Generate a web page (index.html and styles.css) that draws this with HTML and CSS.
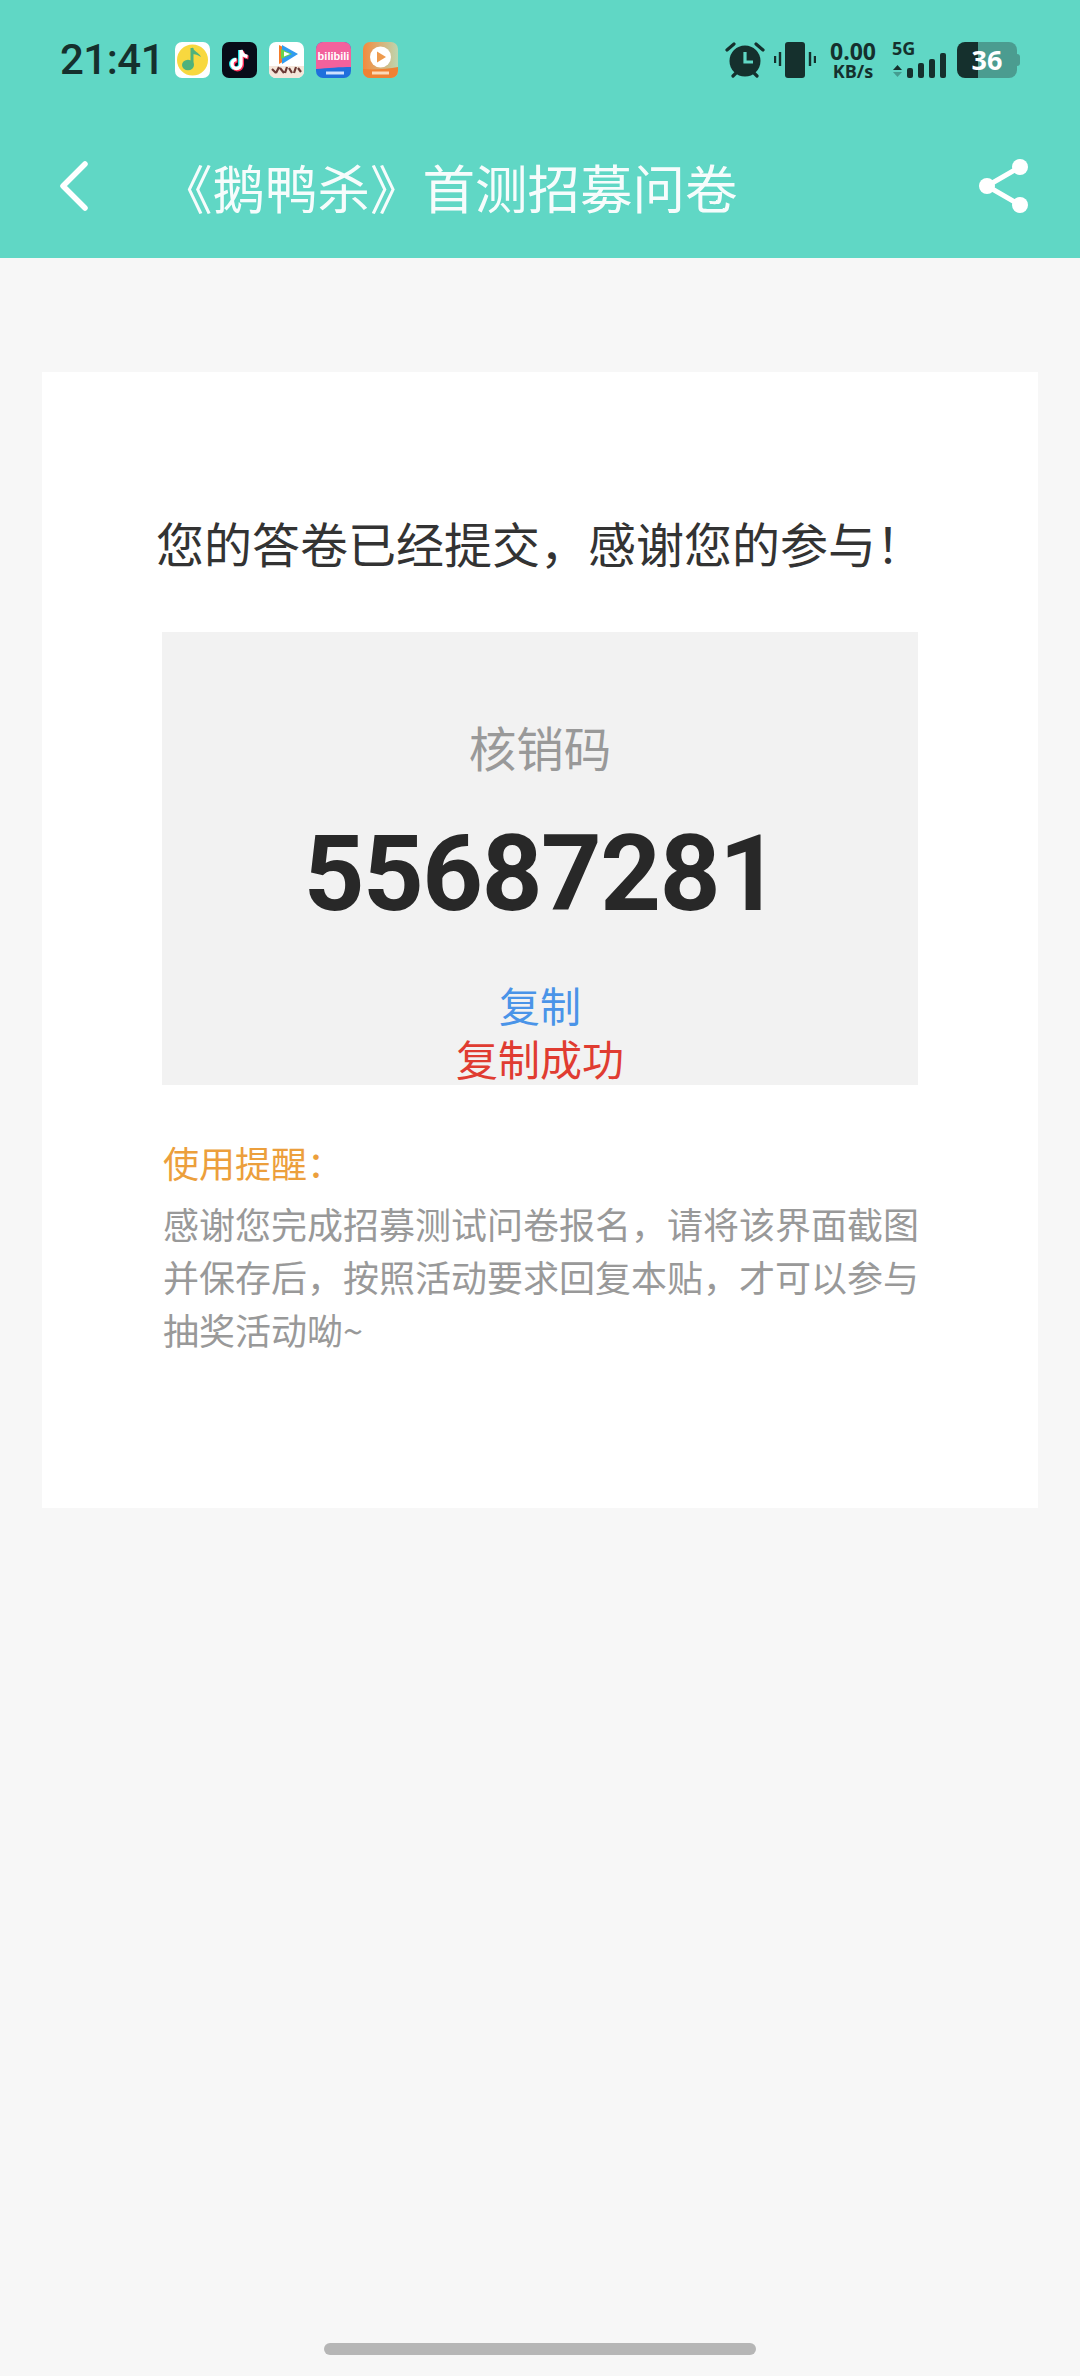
FILE: index.html
```html
<!DOCTYPE html>
<html lang="zh-CN">
<head>
<meta charset="utf-8">
<title>《鹅鸭杀》首测招募问卷</title>
<link rel="stylesheet" href="styles.css">
</head>
<body>
<header class="top">
  <div class="status">
    <span class="time">21:41</span>
    <div class="apps">
      <svg class="app" viewBox="0 0 35 36"><rect width="35" height="36" rx="7" fill="#fff"/><circle cx="17.500" cy="18" r="15.500" fill="#f8d83f"/><path d="M17 6v17" stroke="#4fb27c" stroke-width="3" fill="none"/><path d="M17 5c1 4 7 5 9 10-3-2-6-3-9-3z" fill="#4fb27c"/><ellipse cx="13" cy="23" rx="6" ry="5.200" fill="#4fb27c"/></svg>
      <svg class="app" viewBox="0 0 35 36"><rect width="35" height="36" rx="7" fill="#080c18"/><path d="M19 8v14a4.500 4.500 0 1 1-4.500-4.500M19 8c.5 4 3 6 6.500 6.500" fill="none" stroke="#25e4e8" stroke-width="4" transform="translate(-1 0)"/><path d="M19 8v14a4.500 4.500 0 1 1-4.500-4.500M19 8c.5 4 3 6 6.500 6.500" fill="none" stroke="#fe2c55" stroke-width="4" transform="translate(1 1)"/><path d="M19 8v14a4.500 4.500 0 1 1-4.500-4.500M19 8c.5 4 3 6 6.500 6.500" fill="none" stroke="#fff" stroke-width="3.400"/></svg>
      <svg class="app" viewBox="0 0 35 36"><rect width="35" height="36" rx="7" fill="#fff"/><path d="M0 24h35v5a7 7 0 0 1-7 7H7a7 7 0 0 1-7-7z" fill="#f5e6da"/><path d="M10 3l18 9-18 10z" fill="#f47b2a"/><path d="M13 3l16 9-16 10z" fill="#2f9bf0"/><path d="M12 7l11 5-11 5z" fill="#67d24c"/><path d="M15 9.500l6 2.500-6 2.500z" fill="#fff"/><path d="M3 27l4 4M7 31l3-6M11 26l4 5M16 31l2-6M20 26l3 5M25 31l2-6M29 26l3 4" stroke="#6b3a35" stroke-width="2.200" fill="none"/></svg>
      <svg class="app" viewBox="0 0 35 36"><rect width="35" height="36" rx="7" fill="#1f6fdc"/><path d="M0 7a7 7 0 0 1 7-7h21a7 7 0 0 1 7 7v18c-10 0-24 1-35 2z" fill="#f2619c"/><text x="17.500" y="18" class="bili">bilibili</text><path d="M10 31h18" stroke="#cfe1ff" stroke-width="3"/></svg>
      <svg class="app" viewBox="0 0 35 36"><defs><linearGradient id="og" x1="0" y1="0" x2="1" y2="0"><stop offset="0" stop-color="#f58a3c"/><stop offset="1" stop-color="#bcd6b0"/></linearGradient></defs><rect width="35" height="36" rx="7" fill="url(#og)"/><path d="M0 27c10 1 25 0 35-2v4a7 7 0 0 1-7 7H7a7 7 0 0 1-7-7z" fill="#ef8133"/><path d="M9 31h17" stroke="#fbd9b8" stroke-width="3"/><circle cx="17.500" cy="15" r="10.500" fill="#fff"/><path d="M14 9.500l9 5.500-9 5.500z" fill="#ee9a4d"/></svg>
    </div>
    <div class="sys">
      <svg class="alarm" viewBox="0 0 40 38"><circle cx="20" cy="20" r="15.500" fill="#15302d"/><path d="M20 11v10h8" fill="none" stroke="#60d7c5" stroke-width="3.200"/><path d="M2 9l7-6M38 9l-7-6M8 35l3-3M32 35l-3-3" stroke="#15302d" stroke-width="3.200" stroke-linecap="round"/></svg>
      <svg class="vib" viewBox="0 0 42 36"><rect x="11" y="0" width="20" height="36" rx="3" fill="#15302d"/><path d="M6 10v14M1 14v7M36 10v14M41 14v7" stroke="#15302d" stroke-width="2.400"/></svg>
      <div class="speed"><span class="num">0.00</span><span class="unit">KB/s</span></div>
      <div class="net">
        <svg class="bars" viewBox="0 0 54 38"><path d="M1 29l4.500-5 4.500 5z" fill="#15302d"/><path d="M1 31l4.500 5 4.500-5z" fill="#15302d" opacity=".35"/><rect x="15" y="27" width="6" height="10" rx="2" fill="#15302d"/><rect x="26" y="22" width="6" height="15" rx="2" fill="#15302d"/><rect x="37" y="18" width="6" height="19" rx="2" fill="#15302d"/><rect x="48" y="12" width="6" height="25" rx="2" fill="#15302d"/></svg>
        <span class="fiveg">5G</span>
      </div>
      <div class="bat"><span class="level">36</span></div>
    </div>
  </div>
  <nav class="bar">
    <svg class="back" viewBox="0 0 32 52"><path d="M27 4L5 26l22 22" fill="none" stroke="#fff" stroke-width="5.500" stroke-linecap="round" stroke-linejoin="round"/></svg>
    <h1 class="title">《鹅鸭杀》首测招募问卷</h1>
    <svg class="share" viewBox="0 0 54 56"><path d="M43 9L10 28l33 19" fill="none" stroke="#fff" stroke-width="5"/><circle cx="43" cy="9" r="8" fill="#fff"/><circle cx="10" cy="28" r="8" fill="#fff"/><circle cx="43" cy="47" r="8" fill="#fff"/></svg>
  </nav>
</header>
<main class="card">
  <p class="done">您的答卷已经提交，感谢您的参与！</p>
  <section class="codebox">
    <div class="label">核销码</div>
    <div class="code">55687281</div>
    <div class="copy">复制</div>
    <div class="ok">复制成功</div>
  </section>
  <section class="tips">
    <div class="tips-head">使用提醒：</div>
    <p class="tips-body">感谢您完成招募测试问卷报名，请将该界面截图并保存后，按照活动要求回复本贴，才可以参与抽奖活动呦~</p>
  </section>
</main>
<div class="home"></div>
</body>
</html>
```
FILE: styles.css
```css
* { box-sizing: border-box; }
html, body { margin: 0; padding: 0; }
body {
  width: 1080px;
  height: 2376px;
  background: #f7f7f7;
  font-family: "Noto Sans CJK SC", "Noto Sans", sans-serif;
  display: flex;
  flex-direction: column;
  overflow: hidden;
}
.top { background: #60d7c5; height: 258px; flex: none; }
.status {
  height: 120px;
  padding: 0 60px 0 60px;
  display: flex;
  align-items: center;
  color: #15302d;
}
.time { font: 500 42px/1 Roboto, sans-serif; width: 115px; letter-spacing: -.5px; }
.apps { display: flex; gap: 12px; }
.app { width: 35px; height: 36px; display: block; }
.bili { font: 700 11px "Liberation Sans", sans-serif; fill: #fff; text-anchor: middle; }
.sys { margin-left: auto; display: flex; align-items: center; }
.alarm { width: 40px; height: 38px; }
.vib { width: 42px; height: 36px; margin-left: 9px; }
.speed { width: 48px; margin-left: 13px; display: flex; flex-direction: column; align-items: center; font-family: "Open Sans", sans-serif; font-weight: 700; }
.num { font-size: 23px; line-height: 22px; }
.unit { font-size: 18px; line-height: 18px; }
.net { position: relative; width: 54px; height: 38px; margin-left: 15px; }
.bars { width: 54px; height: 38px; display: block; }
.fiveg { position: absolute; left: 0; top: -3px; font: 700 18px/20px "Open Sans", sans-serif; }
.bat {
  position: relative;
  width: 60px;
  height: 36px;
  margin: 0 3px 0 11px;
  border-radius: 8px;
  background: linear-gradient(90deg, #15302d 21px, #4b9c90 21px);
  display: flex;
  align-items: center;
  justify-content: center;
}
.bat::after {
  content: "";
  position: absolute;
  right: -3px;
  top: 12px;
  width: 3px;
  height: 12px;
  border-radius: 0 3px 3px 0;
  background: #4b9c90;
}
.level { font: 700 27px/36px "Open Sans", sans-serif; color: #fff; }
.bar {
  height: 138px;
  padding: 0 49px 6px 58px;
  display: flex;
  align-items: center;
}
.back { width: 32px; height: 52px; flex: none; }
.title {
  margin: 0 0 0 70px;
  font-size: 52.5px;
  font-weight: 400;
  line-height: 70px;
  color: #fff;
  opacity: .95;
  white-space: nowrap;
}
.share { width: 54px; height: 56px; margin-left: auto; flex: none; }
.card {
  margin: 114px 42px 0;
  height: 1136px;
  background: #fff;
  padding: 140px 78px 0;
  flex: none;
}
.done {
  margin: 0 0 60px 36px;
  font-size: 48px;
  line-height: 60px;
  color: #333;
  white-space: nowrap;
}
.codebox {
  margin: 0 42px;
  height: 453px;
  background: #f2f2f2;
  padding-top: 85px;
  text-align: center;
}
.label { font-size: 47.500px; line-height: 60px; color: #999; }
.code {
  margin-top: 32px;
  font: 700 106px/130px Roboto, sans-serif;
  letter-spacing: -1.500px;
  padding-left: 2px;
  color: #282828;
}
.copy { margin-top: 39px; font-size: 41px; line-height: 53px; color: #4a94e8; }
.ok { font-size: 42px; line-height: 54px; color: #e03c31; }
.tips { margin: 51px 40px 0 43px; }
.tips-head { font-size: 36px; line-height: 53px; color: #ec9f3c; }
.tips-body { margin: 8px 0 0; font-size: 36px; line-height: 53px; color: #999; }
.home {
  margin: auto auto 21px;
  width: 432px;
  height: 12px;
  border-radius: 6px;
  background: #b6b6b6;
  flex: none;
}
```
